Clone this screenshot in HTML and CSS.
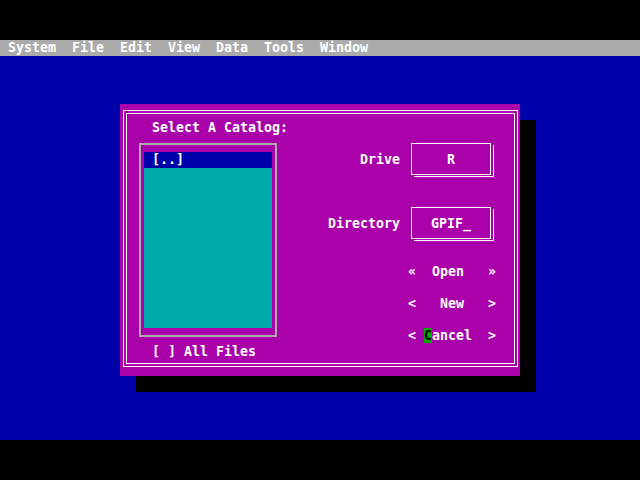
FILE: index.html
```html
<!DOCTYPE html>
<html>
<head>
<meta charset="utf-8">
<title>Select A Catalog</title>
<link rel="stylesheet" href="styles.css">
</head>
<body>
<div class="screen">
  <div class="menubar">
    <span class="menu"><span class="hk">S</span>ystem</span>
    <span class="menu"><span class="hk">F</span>ile</span>
    <span class="menu"><span class="hk">E</span>dit</span>
    <span class="menu"><span class="hk">V</span>iew</span>
    <span class="menu"><span class="hk">D</span>ata</span>
    <span class="menu"><span class="hk">T</span>ools</span>
    <span class="menu"><span class="hk">W</span>indow</span>
  </div>
  <div class="desktop">
    <div class="dialog">
      <div class="frame">
        <div class="frame-inner">
          <div class="left">
            <div class="title">Select A Catalog:</div>
            <div class="listbox">
              <div class="list">
                <div class="item selected">[..]</div>
              </div>
            </div>
            <div class="check">[ ] All Files</div>
          </div>
          <div class="right">
            <div class="field">
              <span class="label">Drive</span>
              <span class="box">R</span>
            </div>
            <div class="field dir">
              <span class="label">Directory</span>
              <span class="box">GPIF_</span>
            </div>
            <div class="buttons">
              <div class="btn">«  Open   »</div>
              <div class="btn">&lt;   New   &gt;</div>
              <div class="btn">&lt; <span class="hot">C</span>ancel  &gt;</div>
            </div>
          </div>
        </div>
      </div>
    </div>
  </div>
</div>
</body>
</html>
```

FILE: styles.css
```css
html, body {
  margin: 0;
  padding: 0;
  background: #000;
}

body {
  width: 640px;
  height: 480px;
  overflow: hidden;
  font-family: "DejaVu Sans Mono", "Liberation Mono", monospace;
  font-weight: bold;
  font-size: 13.29px;
  line-height: 16px;
  color: #fff;
}

.screen {
  padding-top: 40px;
  height: 480px;
  box-sizing: border-box;
}

.menubar {
  height: 16px;
  background: #aaaaaa;
  display: flex;
  gap: 16px;
  padding-left: 8px;
  white-space: pre;
  color: #fff;
}

.hk {
  color: #fff;
}

.desktop {
  height: 384px;
  box-sizing: border-box;
  background: #0000aa;
  padding: 48px 0 0 120px;
}

.dialog {
  width: 400px;
  height: 272px;
  box-sizing: border-box;
  background: #aa00aa;
  padding: 6px 2px 9px 3px;
  box-shadow: 16px 16px 0 #000;
}

.frame {
  height: 100%;
  box-sizing: border-box;
  border: 1px solid #fff;
  padding: 2px;
}

.frame-inner {
  height: 100%;
  box-sizing: border-box;
  border: 1px solid #fff;
  padding-top: 6px;
  display: flex;
  align-items: flex-start;
}

.left {
  margin-left: 12px;
  width: 138px;
}

.title {
  padding-left: 13px;
  height: 16px;
  white-space: pre;
}

.listbox {
  margin-top: 7px;
  border: 2px solid #aaaaaa;
  padding: 7px 3px;
}

.list {
  width: 128px;
  height: 176px;
  background: #00aaaa;
}

.item {
  height: 16px;
  padding-left: 8px;
  white-space: pre;
}

.item.selected {
  background: #0000aa;
}

.check {
  margin-top: 7px;
  padding-left: 13px;
  white-space: pre;
}

.right {
  margin-left: 51px;
  padding-top: 23px;
}

.field {
  display: flex;
  align-items: flex-start;
}

.field.dir {
  margin-top: 32px;
}

.label {
  width: 72px;
  margin-top: 9px;
  text-align: right;
  white-space: pre;
}

.box {
  margin-left: 11px;
  width: 80px;
  height: 32px;
  box-sizing: border-box;
  border: 1px solid #fff;
  padding-top: 8px;
  text-align: center;
  white-space: pre;
  box-shadow: 2px 1px 0 0 #aa00aa, 3px 2px 0 0 #fff;
}

.buttons {
  margin-top: 25px;
  margin-left: 80px;
  display: flex;
  flex-direction: column;
  gap: 16px;
}

.btn {
  height: 16px;
  white-space: pre;
}

.hot {
  background: #00aa00;
  color: #000;
}
```
